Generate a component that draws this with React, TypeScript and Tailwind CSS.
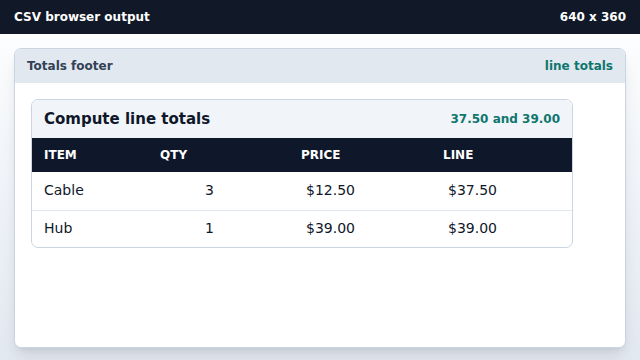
const rows = [
  { item: 'Cable', qty: 3, price: '$12.50', line: '$37.50' },
  { item: 'Hub', qty: 1, price: '$39.00', line: '$39.00' },
];

export default function App() {
  return (
    <div className="w-[640px] h-[360px] overflow-hidden flex flex-col bg-gradient-to-b from-white to-slate-200 font-['DejaVu_Sans',sans-serif]">
      <div className="h-[34px] shrink-0 bg-[#111827] flex items-center justify-between px-[14px] text-white text-[12px] font-bold">
        <span>CSV browser output</span>
        <span>640 x 360</span>
      </div>

      <div className="px-[14px] pt-[14px]">
        <div className="h-[300px] bg-white border border-[#cbd5e1] rounded-[7px] shadow-lg overflow-hidden">
          <div className="h-[34px] bg-[#e2e8f0] flex items-center justify-between px-[12px] text-[12px] font-bold">
            <span className="text-[#334155]">Totals footer</span>
            <span className="text-[#0f766e]">line totals</span>
          </div>

          <div className="p-[16px]">
            <div className="w-[542px] border border-[#cbd5e1] rounded-[7px] overflow-hidden">
              <div className="h-[38px] bg-[#f1f5f9] flex items-center justify-between px-[12px]">
                <span className="text-[15px] font-bold text-[#0f172a]">Compute line totals</span>
                <span className="text-[12px] font-bold text-[#0f766e]">37.50 and 39.00</span>
              </div>
              <table className="w-full table-fixed border-collapse">
                <colgroup>
                  <col className="w-[116px]" />
                  <col className="w-[141px]" />
                  <col className="w-[142px]" />
                  <col />
                </colgroup>
                <thead>
                  <tr className="h-[34px] bg-[#0f172a] text-white text-[12px] font-bold text-left">
                    <th className="pl-[12px]">ITEM</th>
                    <th className="pl-[12px]">QTY</th>
                    <th className="pl-[12px]">PRICE</th>
                    <th className="pl-[12px]">LINE</th>
                  </tr>
                </thead>
                <tbody className="text-[14px] text-[#0f172a]">
                  {rows.map((r, i) => (
                    <tr key={r.item} className={i > 0 ? 'h-[37px] border-t border-[#e2e8f0]' : 'h-[38px]'}>
                      <td className="pl-[12px]">{r.item}</td>
                      <td className="text-right pr-[75px]">{r.qty}</td>
                      <td className="pl-[17px]">{r.price}</td>
                      <td className="pl-[17px]">{r.line}</td>
                    </tr>
                  ))}
                </tbody>
              </table>
            </div>
          </div>
        </div>
      </div>
    </div>
  );
}
